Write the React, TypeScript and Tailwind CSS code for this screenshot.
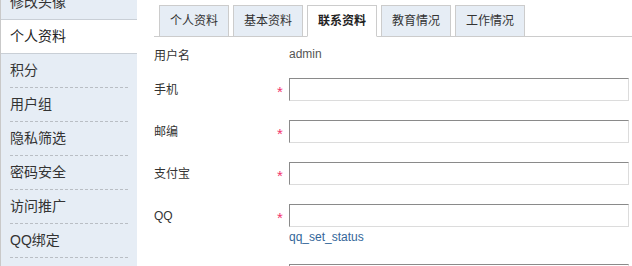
import React from 'react';

const menu = ['积分', '用户组', '隐私筛选', '密码安全', '访问推广', 'QQ绑定'];
const tabs = ['个人资料', '基本资料', '联系资料', '教育情况', '工作情况'];

function Field({
  label,
  required = true,
  children,
  className = '',
}: {
  label: string;
  required?: boolean;
  children?: React.ReactNode;
  className?: string;
}) {
  return (
    <div className={`flex items-center ${className}`}>
      <div className="w-[123px] text-[12px] text-[#333] pt-[1px]">{label}</div>
      <div className="w-[12px] text-[15px] leading-none text-[#f2336b] pt-[3px]">{required ? '*' : ''}</div>
      <div className="flex-1">{children}</div>
    </div>
  );
}

function Box() {
  return (
    <input
      type="text"
      className="block w-full h-[23px] bg-white border border-t-[#8a8a8a] border-l-[#8a8a8a] border-r-[#dcdcdc] border-b-[#dcdcdc] outline-none"
    />
  );
}

export default function App() {
  return (
    <div className="flex h-[266px] w-[632px] overflow-hidden bg-white font-['Liberation_Sans','Noto_Sans_CJK_SC',sans-serif] text-[#333]">
      {/* Sidebar */}
      <div className="w-[137px] shrink-0 border-l border-[#c9c9c9] bg-[#e6edf5]">
        <div className="-mt-[15px] h-[34px] flex items-center pl-[9px] text-[14px]">修改头像</div>
        <div className="h-[35px] border-y border-[#c9cfd6] bg-white flex items-center pl-[9px] text-[14px] text-[#222]">
          个人资料
        </div>
        {menu.map((m) => (
          <div key={m} className="mx-[9px] h-[34px] border-b border-dashed border-[#b9bec4] flex items-center text-[14px]">
            {m}
          </div>
        ))}
      </div>

      {/* Main */}
      <div className="flex-1 pl-[17px] pt-[5px]">
        <div className="flex items-end gap-[4px] pl-[5px] border-b border-[#cccccc] h-[32px]">
          {tabs.map((t) => {
            const active = t === '联系资料';
            return (
              <div
                key={t}
                className={
                  active
                    ? 'h-[32px] -mb-px px-[10px] flex items-center border border-[#cccccc] border-b-white bg-white text-[12px] font-bold text-[#222]'
                    : 'h-[32px] -mb-px px-[10px] flex items-center border border-[#cccccc] bg-[#e6edf5] text-[12px] text-[#333]'
                }
              >
                {t}
              </div>
            );
          })}
        </div>

        <div className="pr-[3px] flex flex-col">
          <div className="flex items-center h-[24px] mt-[6px]">
            <div className="w-[135px] text-[12px] text-[#333] pt-[2px]">用户名</div>
            <div className="text-[12px] text-[#555] -mt-[2px]">admin</div>
          </div>
          <Field label="手机" className="mt-[11px]"><Box /></Field>
          <Field label="邮编" className="mt-[19px]"><Box /></Field>
          <Field label="支付宝" className="mt-[19px]"><Box /></Field>
          <Field label="QQ" className="mt-[19px]"><Box /></Field>
          <div className="pl-[135px] mt-[3px] h-[14px] text-[12px] leading-[14px] text-[#336699]">qq_set_status</div>
          <Field label="" required={false} className="mt-[20px]"><Box /></Field>
        </div>
      </div>
    </div>
  );
}
